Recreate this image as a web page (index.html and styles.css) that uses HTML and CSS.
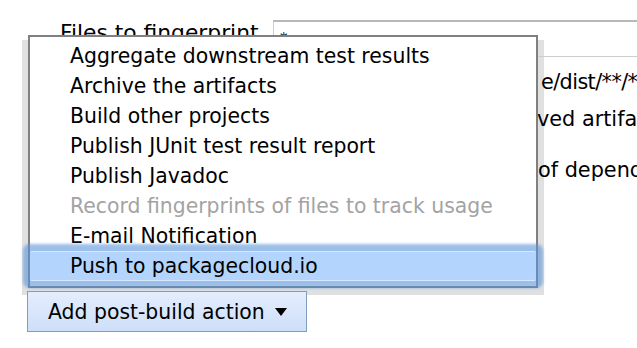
FILE: index.html
```html
<!DOCTYPE html>
<html lang="en">
<head>
    <meta charset="UTF-8">
    <title>Post-build Actions</title>
    <link rel="stylesheet" href="styles.css">
</head>
<body>

    <div class="page">
        <!-- Fingerprint settings -->
        <div class="field">
            <label class="field-label">Files to fingerprint</label>
            <input class="field-input" type="text" value="*">
        </div>
        <div class="help help-first">e/dist/**/*.zip</div>
        <div class="help help-second">ved artifacts</div>
        <div class="help help-third">of dependencies</div>

        <!-- Add post-build action -->
        <div class="actions">
            <ul class="menu">
                <li class="menu-item">Aggregate downstream test results</li>
                <li class="menu-item">Archive the artifacts</li>
                <li class="menu-item">Build other projects</li>
                <li class="menu-item">Publish JUnit test result report</li>
                <li class="menu-item">Publish Javadoc</li>
                <li class="menu-item disabled">Record fingerprints of files to track usage</li>
                <li class="menu-item">E-mail Notification</li>
                <li class="menu-item active">Push to packagecloud.io</li>
            </ul>
            <button class="add-btn">Add post-build action <span class="caret"></span></button>
        </div>
    </div>

</body>
</html>
```

FILE: styles.css
```css
/* General */
body {
    margin: 0;
    font-family: "DejaVu Sans", Verdana, sans-serif;
    color: #000;
    background: #fff;
}

.page {
    padding-top: 20px;
}

/* Fingerprint field */
.field {
    display: flex;
    align-items: flex-start;
}

.field-label {
    width: 273px;
    padding-left: 60px;
    box-sizing: border-box;
    font-size: 21.8px;
    line-height: 25px;
}

.field-input {
    flex: 1;
    height: 37px;
    box-sizing: border-box;
    margin: 0;
    padding: 4px 6px;
    border: 1px solid #cdcdcd;
    border-top: 2px solid #b8b8b8;
    border-right: none;
    background: transparent;
    font-family: inherit;
    font-size: 15px;
    vertical-align: top;
}

/* Help texts on the right */
.help {
    padding-left: 541px;
    font-size: 20.8px;
    line-height: 25px;
    white-space: nowrap;
    overflow: hidden;
}

.help-first { margin-top: 13px; letter-spacing: -0.6px; }
.help-second { margin-top: 12px; padding-left: 537px; }
.help-third { margin-top: 26px; padding-left: 538px; }

/* Actions */
.actions {
    position: relative;
    margin-top: 108px;
    padding-left: 27px;
}

.add-btn {
    display: flex;
    align-items: center;
    width: 280px;
    height: 41px;
    margin: 0;
    padding: 0 0 0 20px;
    border: 1px solid #7f9cbf;
    background: linear-gradient(#e4edfd, #cedffa);
    font-family: inherit;
    font-size: 20.4px;
    color: #000;
    cursor: pointer;
}

.caret {
    width: 0;
    height: 0;
    margin-left: 10px;
    border-left: 6px solid transparent;
    border-right: 6px solid transparent;
    border-top: 8px solid #000;
}

/* Dropdown menu */
.menu {
    position: absolute;
    left: 28px;
    bottom: calc(100% + 3px);
    width: 510px;
    box-sizing: border-box;
    margin: 0;
    padding: 4px 0 5px;
    list-style: none;
    border: 2px solid #808080;
    background: #fff;
}

.menu::before {
    content: "";
    position: absolute;
    top: 3px;
    left: -8px;
    right: -8px;
    bottom: -9px;
    background: rgba(0, 0, 0, 0.12);
    z-index: -1;
}

.menu-item {
    height: 30px;
    padding-left: 40px;
    font-size: 20.4px;
    line-height: 30px;
    white-space: nowrap;
}

.menu-item.disabled {
    color: #a3a3a3;
}

.menu-item.active {
    position: relative;
    box-sizing: border-box;
    border-top: 1px solid #d9e8fc;
    border-bottom: 1px solid #d9e8fc;
    line-height: 28px;
    background: #b3d4fd;
    box-shadow: 0 0 3px 7px rgba(88, 148, 218, 0.6);
    border-radius: 2px;
}
```
